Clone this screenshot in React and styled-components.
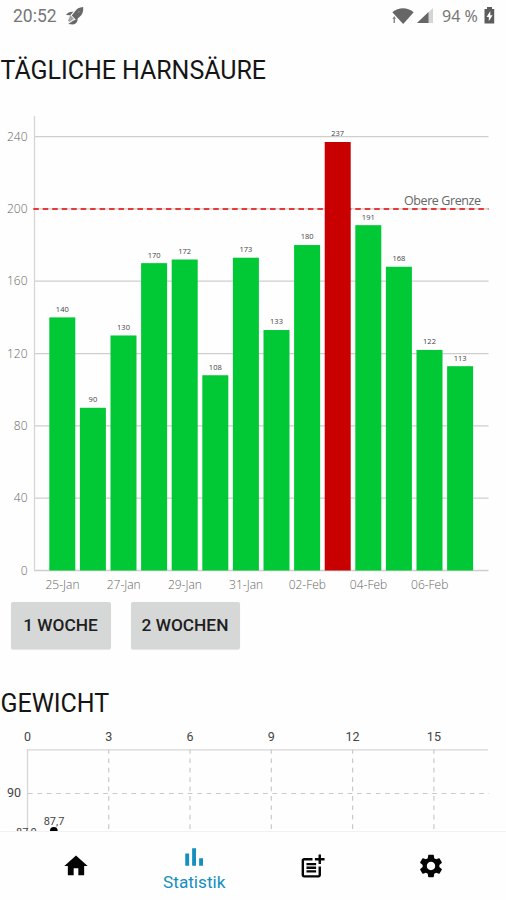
import React from "react"
import styled, { createGlobalStyle } from "styled-components"
import { MdHome, MdPostAdd, MdSettings } from "react-icons/md"

const GlobalStyle = createGlobalStyle`
  * {
    box-sizing: border-box;
  }
  body {
    margin: 0;
    background: #fefefe;
    font-family: Roboto, "Liberation Sans", sans-serif;
    overflow: hidden;
  }
`

const READINGS = [140, 90, 130, 170, 172, 108, 173, 133, 180, 237, 191, 168, 122, 113]
const DATES = ["25-Jan", "27-Jan", "29-Jan", "31-Jan", "02-Feb", "04-Feb", "06-Feb"]
const UPPER_LIMIT = 200
const STEP = 30.6

const StatsIcon = ({ size }) => (
  <svg width={size} height={size} viewBox="0 0 24 24" fill="currentColor">
    <path d="M5 9.200h3.100V19H5zM10.500 5h3.100v14h-3.100zM16.100 13h3.100v6h-3.100z" />
  </svg>
)

const TABS = [
  { icon: MdHome, size: 28 },
  { icon: StatsIcon, size: 30, label: "Statistik" },
  { icon: MdPostAdd, size: 29 },
  { icon: MdSettings, size: 28 },
]

// chart coordinates start at the top of the first chart
const valueToY = value => 470.5 - value * 1.808

const UricAcidChart = () => (
  <Chart height={496} viewBox="0 0 506 496">
    {[0, 40, 80, 120, 160, 200, 240].map(value => (
      <g key={value}>
        <GridLine x1="34" x2="488.5" y1={valueToY(value)} y2={valueToY(value)} />
        <AxisLabel x="27.5" y={valueToY(value) + 4} textAnchor="end">
          {value}
        </AxisLabel>
      </g>
    ))}
    <AxisLine x1="34.5" x2="34.5" y1="16" y2="471" />
    <LimitLine x1="33.3" x2="488.5" y1="109" y2="109" />
    {READINGS.map((value, index) => {
      const x = 49.3 + index * STEP
      return (
        <g key={index}>
          <Bar
            x={x}
            y={valueToY(value)}
            width="26"
            height={value * 1.808}
            $high={value > UPPER_LIMIT}
          />
          <BarLabel x={x + 13} y={valueToY(value) - 5.6} textAnchor="middle">
            {value}
          </BarLabel>
        </g>
      )
    })}
    {DATES.map((date, index) => (
      <AxisLabel key={date} x={62.5 + index * STEP * 2} y="488.5" textAnchor="middle">
        {date}
      </AxisLabel>
    ))}
    <LimitLabel x="404" y="104.500" textLength="77">
      Obere Grenze
    </LimitLabel>
  </Chart>
)

const WeightChart = () => (
  <Chart height={107} viewBox="0 0 506 107">
    {[0, 3, 6, 9, 12, 15].map((day, index) => {
      const x = 27.4 + index * 81.3
      return (
        <g key={day}>
          {index > 0 && <DashedLine x1={x} x2={x} y1="25" y2="107" />}
          <DayLabel x={x} y="17.3" textAnchor="middle">
            {day}
          </DayLabel>
        </g>
      )
    })}
    <DashedLine x1="28" x2="489" y1="69.5" y2="69.5" />
    <AxisLine x1="27.5" x2="488" y1="25.8" y2="25.8" />
    <AxisLine x1="27.5" x2="27.5" y1="25" y2="107" />
    <DayLabel x="7" y="73.3">
      90
    </DayLabel>
    <PointLabel x="16" y="112.3">
      87,0
    </PointLabel>
    <PointLabel x="54" y="101" textAnchor="middle">
      87,7
    </PointLabel>
    <circle cx="53.8" cy="107" r="3.9" />
  </Chart>
)

const Rocket = () => (
  <svg width="20" height="20" viewBox="0 0 20 20" fill="#686868">
    <path d="M18.2 1c-4 .2-6.6 1.700-8.300 4.600L6.800 9.500l4.300 4.400 3.600-3.200C17.500 8.600 18.500 5.400 18.200 1z" />
    <path d="M8.400 5.700C5.200 5.400 2.800 6.300 1 9l4.300.3zM12.700 12.400c.1 3.100-1.400 5.300-4.600 6.200l-5-.7 5-3.200z" />
    <path d="M5.300 9l3.600 4-4.700 3.100L3 14.800z" opacity=".6" />
    <circle cx="13.700" cy="5.700" r="1" fill="#888" />
  </svg>
)

const Wifi = () => (
  <svg width="22" height="18" viewBox="0 0 22 18" fill="#666">
    <path d="M.3 5.200C6.700-.1 15.300-.1 21.700 5.200L11.200 17z" />
    <path d="M0 9h4v8H0z" fill="#fefefe" />
    <path d="M2.200 9l1.900 2.700H3V16H1.500v-4.300H.4z" fill="#888" />
  </svg>
)

const Signal = () => (
  <svg width="17" height="17" viewBox="0 0 17 17">
    <path d="M0 16L16 1v15z" fill="#d5d5d5" />
    <path d="M0 16L11.500 5v11z" fill="#666" />
  </svg>
)

const Battery = () => (
  <svg width="11" height="17" viewBox="0 0 11 17">
    <path d="M3 0h5v2h2.200v14.500H.5V2H3z" fill="#5c5c5c" />
    <path d="M6.300 4L2.500 10h2.300v4.300l3.800-6H6.300z" fill="#fff" />
  </svg>
)

const App = () => (
  <Screen>
    <GlobalStyle />
    <StatusBar>
      <Clock>20:52</Clock>
      <Rocket />
      <StatusIcons>
        <Wifi />
        <Signal />
        <Percent>94 %</Percent>
        <Battery />
      </StatusIcons>
    </StatusBar>
    <Content>
      <Heading>TÄGLICHE HARNSÄURE</Heading>
      <UricAcidChart />
      <ButtonRow>
        <RangeButton $width="100px">1 WOCHE</RangeButton>
        <RangeButton $width="109px">2 WOCHEN</RangeButton>
      </ButtonRow>
      <WeightHeading>GEWICHT</WeightHeading>
      <WeightChart />
    </Content>
    <NavBar>
      {TABS.map(({ icon: Icon, size, label }, index) => (
        <NavItem key={index} $active={Boolean(label)}>
          <Icon size={size} />
          {label && <NavLabel>{label}</NavLabel>}
        </NavItem>
      ))}
    </NavBar>
  </Screen>
)

const Screen = styled.div`
  display: flex;
  flex-direction: column;
  width: 506px;
  height: 900px;
  background: #fefefe;
`

const StatusBar = styled.header`
  display: flex;
  align-items: center;
  height: 32px;
  padding: 0 11px 1px 13px;
  color: #777;
`

const Clock = styled.span`
  width: 52px;
  font-size: 17.5px;
`

const StatusIcons = styled.div`
  display: flex;
  align-items: center;
  gap: 3px;
  margin-left: auto;
`

const Percent = styled.span`
  width: 39px;
  margin-left: 5px;
  font-family: "Noto Sans", sans-serif;
  font-size: 16px;
  white-space: nowrap;
`

const Content = styled.main`
  flex: 1;
  min-height: 0;
  overflow: hidden;
`

const Heading = styled.h1`
  height: 68px;
  margin: 0;
  padding: 23px 0 0 0.5px;
  font-size: 25px;
  line-height: 32px;
  letter-spacing: -0.05px;
  font-weight: 400;
  color: #151515;
  white-space: nowrap;
`

const WeightHeading = styled(Heading)`
  height: 71px;
  padding-top: 35px;
`

const Chart = styled.svg`
  display: block;
  width: 506px;
  height: ${props => props.height}px;
  font-family: "Open Sans", "Noto Sans", sans-serif;
`

const GridLine = styled.line`
  stroke: #cecece;
  stroke-width: 1.3;
`

const AxisLine = styled(GridLine)`
  stroke: #d6d6d6;
`

const LimitLine = styled.line`
  stroke: #e63a3a;
  stroke-width: 2;
  stroke-dasharray: 5.5 3.97;
`

const DashedLine = styled.line`
  stroke: #c9c9c9;
  stroke-width: 1.2;
  stroke-dasharray: 4.7 4.7;
`

const Bar = styled.rect`
  fill: ${props => (props.$high ? "#c80000" : "#00c935")};
`

const AxisLabel = styled.text`
  font-size: 12px;
  font-weight: 300;
  fill: #666;
`

const BarLabel = styled.text`
  font-size: 7.5px;
  fill: #444;
`

const LimitLabel = styled.text`
  font-size: 12.5px;
  fill: #666;
`

const DayLabel = styled.text`
  font-family: Roboto, sans-serif;
  font-size: 12.5px;
  fill: #444;
`

const PointLabel = styled(DayLabel)`
  font-size: 11px;
`

const ButtonRow = styled.div`
  display: flex;
  gap: 20px;
  height: 57px;
  padding: 6px 0 4px 10.5px;
`

const RangeButton = styled.button`
  width: ${props => props.$width};
  height: 47px;
  padding: 0 0 2px;
  border: 0;
  border-radius: 2px;
  background: #d6d8d7;
  box-shadow: 0 1px 1px rgba(0, 0, 0, 0.1);
  color: #202020;
  font-family: Roboto, sans-serif;
  font-size: 17.3px;
  font-weight: 500;
  white-space: nowrap;
`

const NavBar = styled.nav`
  display: grid;
  grid-template-columns: repeat(4, 118.5px);
  justify-content: center;
  height: 69px;
  border-top: 1px solid #f1f1f1;
  background: #fefefe;
`

const NavItem = styled.div`
  display: flex;
  flex-direction: column;
  align-items: center;
  padding: ${props => (props.$active ? "10px" : "20px")} 0 0 1px;
  color: ${props => (props.$active ? "#148fc0" : "#050505")};
`

const NavLabel = styled.span`
  font-size: 17.2px;
  line-height: 20px;
`

export default App
